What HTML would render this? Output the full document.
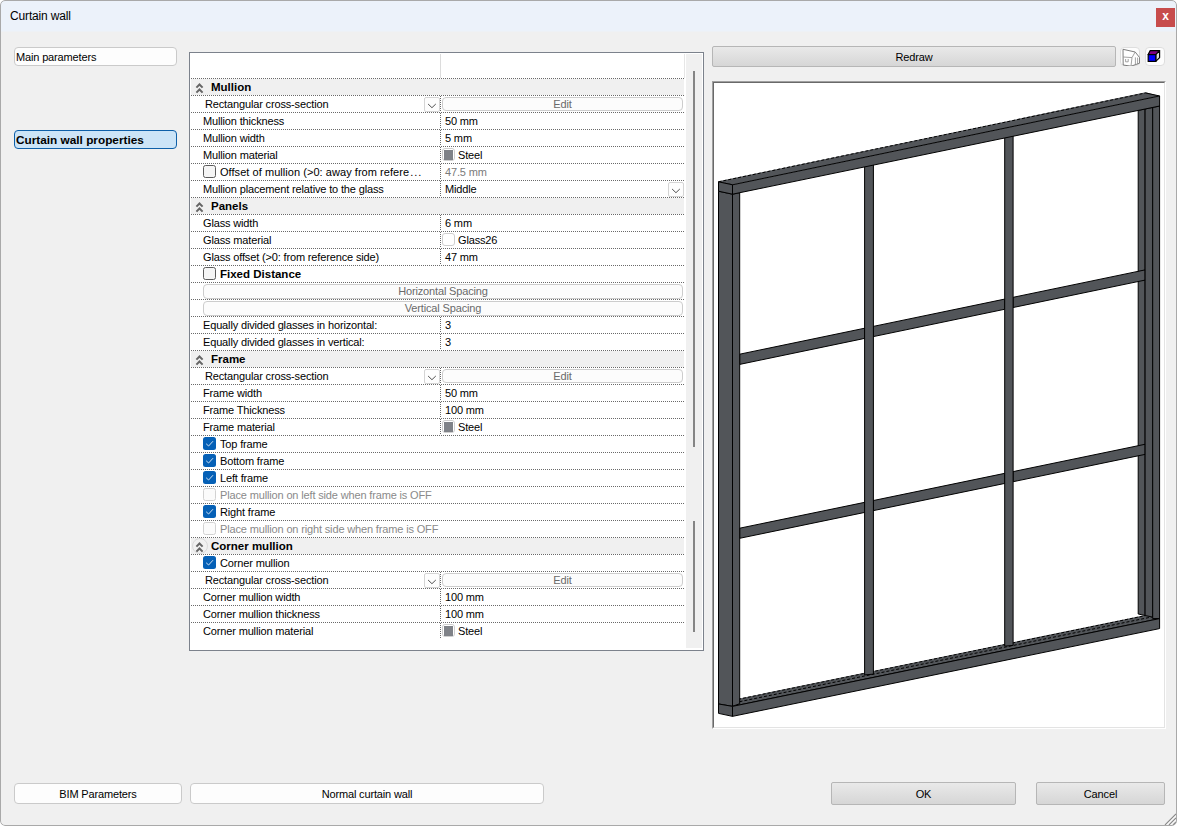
<!DOCTYPE html>
<html><head><meta charset="utf-8"><title>Curtain wall</title><style>
*{box-sizing:border-box;margin:0;padding:0}
html,body{width:1177px;height:826px;overflow:hidden;background:#ffffff}
body{position:relative;font-family:"Liberation Sans",sans-serif;font-size:11px;color:#000}
.a{position:absolute}
#win{left:0;top:0;width:1177px;height:826px;background:#f0f0f0;border-radius:5px;overflow:hidden}
#wb{left:0;top:0;width:1177px;height:826px;border:1px solid #a9a9a9;border-radius:5px;pointer-events:none}
#title{left:1px;top:1px;width:1175px;height:31px;background:linear-gradient(#ecf2fa 0 30px,#eef1f5 30px 31px)}
#ttext{left:10px;top:9px;font-size:12px;line-height:14px;color:#000}
#close{left:1156px;top:8px;width:19px;height:19px;background:#c74c4c;color:#fff;font-size:12px;line-height:17px;text-align:center;font-weight:bold}
.lbtn{background:#fdfdfd;border:1px solid #cacaca;border-radius:4px}
.gbtn{background:linear-gradient(#e9e9e9,#d6d6d6);border:1px solid #b6b6b6;border-radius:2px;text-align:center;font-size:11px;color:#000}
.t{position:absolute;white-space:nowrap;line-height:13px;letter-spacing:-0.15px}
.hl{height:1px;background:repeating-linear-gradient(90deg,#696969 0 1px,transparent 1px 2px)}
.vl{width:1px;background:repeating-linear-gradient(180deg,#696969 0 1px,transparent 1px 2px)}
.band{background:#f0f0f0}
.cb{width:13px;height:13px;border-radius:2.5px}
.cbu{border:1px solid #5b5b5b;background:#f5f5f5}
.cbd{border:1px solid #d2d2d2;background:#fbfbfb}
.cbc{background:#0560b6}
.sw{width:13px;height:13px;border:1px solid #cfcfcf;border-radius:3px;background:#fff}
.swi{left:1px;top:1px;width:9px;height:10px;background:#7f8288}
.ebtn{border:1px solid #cdcdcd;border-radius:4px;background:#fcfcfc;color:#6a6a6a;text-align:center}
.dd{width:16px;height:15px;border:1px solid #d4d4d4;border-radius:2px;background:#fdfdfd}
</style></head>
<body>
<div id="win" class="a">
<div id="title" class="a"></div>
<div id="ttext" class="t">Curtain wall</div>
<div id="close" class="a">x</div>
<div class="a lbtn t" style="left:14px;top:47px;width:163px;height:19px;line-height:19px;padding-left:1px">Main parameters</div>
<div class="a t" style="left:14px;top:130px;width:163px;height:19px;line-height:18px;padding-left:1px;background:#cce4f7;border:1.5px solid #0e5fa8;border-radius:4px;font-weight:bold;font-size:11.8px;letter-spacing:0">Curtain wall properties</div>
<div class="a lbtn t" style="left:14px;top:783px;width:168px;height:21px;line-height:21px;text-align:center">BIM Parameters</div>
<div class="a lbtn t" style="left:190px;top:783px;width:354px;height:21px;line-height:21px;text-align:center">Normal curtain wall</div>
<div class="a gbtn t" style="left:831px;top:782px;width:185px;height:23px;line-height:22px">OK</div>
<div class="a gbtn t" style="left:1036px;top:782px;width:129px;height:23px;line-height:22px">Cancel</div>
<svg class="a" style="left:1163px;top:812px" width="14" height="14"><path d="M13 2 L2 13 M13 6 L6 13 M13 10 L10 13" stroke="#8c8c8c" stroke-width="1.1"/><path d="M13.6 3 L3 13.6 M13.6 7 L7 13.6 M13.6 11 L11 13.6" stroke="#ffffff" stroke-width="0.9"/></svg>
<div class="a" style="left:189px;top:52px;width:515px;height:599px;border:1px solid #7c828c;background:#fff"></div>
<div class="a" style="left:440px;top:54px;width:1px;height:24px;background:#dcdcdc"></div>
<div class="a" style="left:684px;top:54px;width:1px;height:24px;background:#e6e6e6"></div>
<div class="a" style="left:686px;top:54px;width:16px;height:594px;background:#f0f0f0"></div>
<div class="a" style="left:693px;top:71px;width:2px;height:376px;background:#858585"></div>
<div class="a" style="left:693px;top:521px;width:2px;height:111px;background:#858585"></div>
<div class="a hl" style="left:191px;top:78px;width:493px"></div>
<div class="a band" style="left:191px;top:79px;width:493px;height:16px"></div>
<svg width="10" height="12" style="position:absolute;left:195px;top:82px"><path d="M1.4 5.6 L4.5 2.5 L7.6 5.6 M1.4 10.6 L4.5 7.5 L7.6 10.6" fill="none" stroke="#666666" stroke-width="2"/></svg>
<div class="t" style="left:211px;top:81px;font-weight:bold;font-size:11.5px;letter-spacing:0">Mullion</div>
<div class="a hl" style="left:191px;top:95px;width:493px"></div>
<div class="a vl" style="left:440px;top:96px;height:16px"></div>
<div class="t" style="left:205px;top:98px;">Rectangular cross-section</div>
<div class="a dd" style="left:424px;top:97px"><svg width="15" height="15" style="position:absolute;left:0;top:0"><path d="M3.1 6.0 L6.95 9.7 L10.8 6.0" fill="none" stroke="#505050" stroke-width="1"/></svg></div>
<div class="a ebtn t" style="left:442px;top:97px;width:241px;height:14px;line-height:12px">Edit</div>
<div class="a hl" style="left:191px;top:112px;width:493px"></div>
<div class="a vl" style="left:440px;top:113px;height:16px"></div>
<div class="t" style="left:203px;top:115px;">Mullion thickness</div>
<div class="t" style="left:445px;top:115px;">50 mm</div>
<div class="a hl" style="left:191px;top:129px;width:493px"></div>
<div class="a vl" style="left:440px;top:130px;height:16px"></div>
<div class="t" style="left:203px;top:132px;">Mullion width</div>
<div class="t" style="left:445px;top:132px;">5 mm</div>
<div class="a hl" style="left:191px;top:146px;width:493px"></div>
<div class="a vl" style="left:440px;top:147px;height:16px"></div>
<div class="t" style="left:203px;top:149px;">Mullion material</div>
<div class="a sw" style="left:442px;top:148px"><div class="a swi"></div></div>
<div class="t" style="left:458px;top:149px;">Steel</div>
<div class="a hl" style="left:191px;top:163px;width:493px"></div>
<div class="a vl" style="left:440px;top:164px;height:16px"></div>
<div class="a cb cbu" style="left:203px;top:165px"></div>
<div class="t" style="left:220px;top:166px;"><span style="letter-spacing:0.05px">Offset of mullion (&gt;0: away from refere</span><span style="letter-spacing:1px;margin-left:1px">...</span></div>
<div class="t" style="left:445px;top:166px;color:#7a7a7a">47.5 mm</div>
<div class="a hl" style="left:191px;top:180px;width:493px"></div>
<div class="a vl" style="left:440px;top:181px;height:16px"></div>
<div class="t" style="left:203px;top:183px;">Mullion placement relative to the glass</div>
<div class="t" style="left:445px;top:183px;">Middle</div>
<div class="a dd" style="left:668px;top:182px"><svg width="15" height="15" style="position:absolute;left:0;top:0"><path d="M3.1 6.0 L6.95 9.7 L10.8 6.0" fill="none" stroke="#505050" stroke-width="1"/></svg></div>
<div class="a hl" style="left:191px;top:197px;width:493px"></div>
<div class="a band" style="left:191px;top:198px;width:493px;height:16px"></div>
<svg width="10" height="12" style="position:absolute;left:195px;top:201px"><path d="M1.4 5.6 L4.5 2.5 L7.6 5.6 M1.4 10.6 L4.5 7.5 L7.6 10.6" fill="none" stroke="#666666" stroke-width="2"/></svg>
<div class="t" style="left:211px;top:200px;font-weight:bold;font-size:11.5px;letter-spacing:0">Panels</div>
<div class="a hl" style="left:191px;top:214px;width:493px"></div>
<div class="a vl" style="left:440px;top:215px;height:16px"></div>
<div class="t" style="left:203px;top:217px;">Glass width</div>
<div class="t" style="left:445px;top:217px;">6 mm</div>
<div class="a hl" style="left:191px;top:231px;width:493px"></div>
<div class="a vl" style="left:440px;top:232px;height:16px"></div>
<div class="t" style="left:203px;top:234px;">Glass material</div>
<div class="a sw" style="left:442px;top:233px"></div>
<div class="t" style="left:458px;top:234px;">Glass26</div>
<div class="a hl" style="left:191px;top:248px;width:493px"></div>
<div class="a vl" style="left:440px;top:249px;height:16px"></div>
<div class="t" style="left:203px;top:251px;">Glass offset (&gt;0: from reference side)</div>
<div class="t" style="left:445px;top:251px;">47 mm</div>
<div class="a hl" style="left:191px;top:265px;width:493px"></div>
<div class="a cb cbu" style="left:203px;top:267px"></div>
<div class="t" style="left:220px;top:268px;font-weight:bold;font-size:11.5px;letter-spacing:0">Fixed Distance</div>
<div class="a hl" style="left:191px;top:282px;width:493px"></div>
<div class="a ebtn t" style="left:203px;top:284px;width:480px;height:15px;line-height:13px">Horizontal Spacing</div>
<div class="a hl" style="left:191px;top:299px;width:493px"></div>
<div class="a ebtn t" style="left:203px;top:301px;width:480px;height:15px;line-height:13px">Vertical Spacing</div>
<div class="a hl" style="left:191px;top:316px;width:493px"></div>
<div class="a vl" style="left:440px;top:317px;height:16px"></div>
<div class="t" style="left:203px;top:319px;">Equally divided glasses in horizontal:</div>
<div class="t" style="left:445px;top:319px;">3</div>
<div class="a hl" style="left:191px;top:333px;width:493px"></div>
<div class="a vl" style="left:440px;top:334px;height:16px"></div>
<div class="t" style="left:203px;top:336px;">Equally divided glasses in vertical:</div>
<div class="t" style="left:445px;top:336px;">3</div>
<div class="a hl" style="left:191px;top:350px;width:493px"></div>
<div class="a band" style="left:191px;top:351px;width:493px;height:16px"></div>
<svg width="10" height="12" style="position:absolute;left:195px;top:354px"><path d="M1.4 5.6 L4.5 2.5 L7.6 5.6 M1.4 10.6 L4.5 7.5 L7.6 10.6" fill="none" stroke="#666666" stroke-width="2"/></svg>
<div class="t" style="left:211px;top:353px;font-weight:bold;font-size:11.5px;letter-spacing:0">Frame</div>
<div class="a hl" style="left:191px;top:367px;width:493px"></div>
<div class="a vl" style="left:440px;top:368px;height:16px"></div>
<div class="t" style="left:205px;top:370px;">Rectangular cross-section</div>
<div class="a dd" style="left:424px;top:369px"><svg width="15" height="15" style="position:absolute;left:0;top:0"><path d="M3.1 6.0 L6.95 9.7 L10.8 6.0" fill="none" stroke="#505050" stroke-width="1"/></svg></div>
<div class="a ebtn t" style="left:442px;top:369px;width:241px;height:14px;line-height:12px">Edit</div>
<div class="a hl" style="left:191px;top:384px;width:493px"></div>
<div class="a vl" style="left:440px;top:385px;height:16px"></div>
<div class="t" style="left:203px;top:387px;">Frame width</div>
<div class="t" style="left:445px;top:387px;">50 mm</div>
<div class="a hl" style="left:191px;top:401px;width:493px"></div>
<div class="a vl" style="left:440px;top:402px;height:16px"></div>
<div class="t" style="left:203px;top:404px;">Frame Thickness</div>
<div class="t" style="left:445px;top:404px;">100 mm</div>
<div class="a hl" style="left:191px;top:418px;width:493px"></div>
<div class="a vl" style="left:440px;top:419px;height:16px"></div>
<div class="t" style="left:203px;top:421px;">Frame material</div>
<div class="a sw" style="left:442px;top:420px"><div class="a swi"></div></div>
<div class="t" style="left:458px;top:421px;">Steel</div>
<div class="a hl" style="left:191px;top:435px;width:493px"></div>
<div class="a cb cbc" style="left:203px;top:437px"><svg width="13" height="13" style="position:absolute;left:0;top:0"><path d="M3.2 6.8 L5.6 9.0 L10.0 4.2" fill="none" stroke="#e4edf7" stroke-width="0.9"/></svg></div>
<div class="t" style="left:220px;top:438px;">Top frame</div>
<div class="a hl" style="left:191px;top:452px;width:493px"></div>
<div class="a cb cbc" style="left:203px;top:454px"><svg width="13" height="13" style="position:absolute;left:0;top:0"><path d="M3.2 6.8 L5.6 9.0 L10.0 4.2" fill="none" stroke="#e4edf7" stroke-width="0.9"/></svg></div>
<div class="t" style="left:220px;top:455px;">Bottom frame</div>
<div class="a hl" style="left:191px;top:469px;width:493px"></div>
<div class="a cb cbc" style="left:203px;top:471px"><svg width="13" height="13" style="position:absolute;left:0;top:0"><path d="M3.2 6.8 L5.6 9.0 L10.0 4.2" fill="none" stroke="#e4edf7" stroke-width="0.9"/></svg></div>
<div class="t" style="left:220px;top:472px;">Left frame</div>
<div class="a hl" style="left:191px;top:486px;width:493px"></div>
<div class="a cb cbd" style="left:203px;top:488px"></div>
<div class="t" style="left:220px;top:489px;color:#8a8a8a">Place mullion on left side when frame is OFF</div>
<div class="a hl" style="left:191px;top:503px;width:493px"></div>
<div class="a cb cbc" style="left:203px;top:505px"><svg width="13" height="13" style="position:absolute;left:0;top:0"><path d="M3.2 6.8 L5.6 9.0 L10.0 4.2" fill="none" stroke="#e4edf7" stroke-width="0.9"/></svg></div>
<div class="t" style="left:220px;top:506px;">Right frame</div>
<div class="a hl" style="left:191px;top:520px;width:493px"></div>
<div class="a cb cbd" style="left:203px;top:522px"></div>
<div class="t" style="left:220px;top:523px;color:#8a8a8a">Place mullion on right side when frame is OFF</div>
<div class="a hl" style="left:191px;top:537px;width:493px"></div>
<div class="a band" style="left:191px;top:538px;width:493px;height:16px"></div>
<div class="a" style="left:192px;top:538px;width:16px;height:16px;border-radius:50%;border:1px solid #dadada;background:#f1f1f1"></div>
<svg width="10" height="12" style="position:absolute;left:195px;top:541px"><path d="M1.4 5.6 L4.5 2.5 L7.6 5.6 M1.4 10.6 L4.5 7.5 L7.6 10.6" fill="none" stroke="#666666" stroke-width="2"/></svg>
<div class="t" style="left:211px;top:540px;font-weight:bold;font-size:11.5px;letter-spacing:0">Corner mullion</div>
<div class="a hl" style="left:191px;top:554px;width:493px"></div>
<div class="a cb cbc" style="left:203px;top:556px"><svg width="13" height="13" style="position:absolute;left:0;top:0"><path d="M3.2 6.8 L5.6 9.0 L10.0 4.2" fill="none" stroke="#e4edf7" stroke-width="0.9"/></svg></div>
<div class="t" style="left:220px;top:557px;">Corner mullion</div>
<div class="a hl" style="left:191px;top:571px;width:493px"></div>
<div class="a vl" style="left:440px;top:572px;height:16px"></div>
<div class="t" style="left:205px;top:574px;">Rectangular cross-section</div>
<div class="a dd" style="left:424px;top:573px"><svg width="15" height="15" style="position:absolute;left:0;top:0"><path d="M3.1 6.0 L6.95 9.7 L10.8 6.0" fill="none" stroke="#505050" stroke-width="1"/></svg></div>
<div class="a ebtn t" style="left:442px;top:573px;width:241px;height:14px;line-height:12px">Edit</div>
<div class="a hl" style="left:191px;top:588px;width:493px"></div>
<div class="a vl" style="left:440px;top:589px;height:16px"></div>
<div class="t" style="left:203px;top:591px;">Corner mullion width</div>
<div class="t" style="left:445px;top:591px;">100 mm</div>
<div class="a hl" style="left:191px;top:605px;width:493px"></div>
<div class="a vl" style="left:440px;top:606px;height:16px"></div>
<div class="t" style="left:203px;top:608px;">Corner mullion thickness</div>
<div class="t" style="left:445px;top:608px;">100 mm</div>
<div class="a hl" style="left:191px;top:622px;width:493px"></div>
<div class="a vl" style="left:440px;top:623px;height:16px"></div>
<div class="t" style="left:203px;top:625px;">Corner mullion material</div>
<div class="a sw" style="left:442px;top:624px"><div class="a swi"></div></div>
<div class="t" style="left:458px;top:625px;">Steel</div>
<div class="a gbtn t" style="left:712px;top:46px;width:404px;height:21px;line-height:21px">Redraw</div>
<div class="a" style="left:1120px;top:47px;width:20px;height:19px;border:1px solid #dedede;border-radius:4px;background:#fdfdfd"><svg width="20" height="19" style="position:absolute;left:-1px;top:-1px" viewBox="1120 47 20 19">
<path d="M1123 49.3 L1135.2 52 L1139.6 57.6 L1139.6 63.2 L1131 66.2 L1123.2 65 Z" fill="#fff" stroke="#6e6e6e" stroke-width="0.9" stroke-linejoin="round"/>
<path d="M1123.2 57 L1132 57.6 L1135.2 52 M1132 57.6 L1131 66 M1135.4 57.4 L1135.4 65 M1137.6 57.6 L1137.6 64.2 M1125.6 59 L1125.6 61.8 L1128.2 61.8 L1128.2 59" fill="none" stroke="#8c8c8c" stroke-width="0.8"/>
</svg></div>
<div class="a" style="left:1145px;top:47px;width:20px;height:19px;border:1px solid #dedede;border-radius:4px;background:#fdfdfd"><svg width="20" height="19" style="position:absolute;left:-1px;top:-1px" viewBox="1145 47 20 19">
<polygon points="1148.2,54.6 1150.2,50.6 1159.6,50.6 1155.8,54.6" fill="#800080" stroke="#000" stroke-width="1.2" stroke-linejoin="round"/>
<polygon points="1155.8,54.6 1159.6,50.6 1159.6,57.6 1155.8,61.4" fill="#dcdcdc" stroke="#000" stroke-width="1.2" stroke-linejoin="round"/>
<rect x="1148.2" y="54.6" width="7.6" height="6.8" fill="#0000ff" stroke="#000" stroke-width="1.2"/>
</svg></div>
<div class="a" style="left:712px;top:81px;width:454px;height:648px;border-top:1px solid #a0a0a0;border-left:1px solid #a0a0a0;border-right:1px solid #ffffff;border-bottom:1px solid #ffffff"></div>
<div class="a" style="left:713px;top:82px;width:452px;height:646px;border-top:1px solid #696969;border-left:1px solid #696969;border-right:1px solid #e3e3e3;border-bottom:1px solid #e3e3e3;background:#fff"></div>
<svg class="a" style="left:714px;top:83px" width="450" height="644" viewBox="714 83 450 644"><polygon points="732.50,706.36 1159.60,618.59 1145.60,614.99 718.50,702.76" fill="#525559" stroke="none" stroke-width="1" stroke-linejoin="round" />
<line x1="732.50" y1="706.36" x2="1159.60" y2="618.59" stroke="#000" stroke-width="1" />
<line x1="724.80" y1="704.71" x2="1151.90" y2="616.94" stroke="#000" stroke-width="1" stroke-dasharray="3 2"/>
<line x1="718.50" y1="703.36" x2="1145.60" y2="615.59" stroke="#000" stroke-width="1" stroke-dasharray="3 2"/>
<polygon points="1138.20,110.42 1145.10,109.00 1145.10,615.49 1138.20,614.01" fill="#525559" stroke="#000" stroke-width="1" stroke-linejoin="round" />
<polygon points="739.70,354.20 864.60,328.22 864.60,338.42 739.70,364.40" fill="#525559" stroke="#000" stroke-width="1" stroke-linejoin="round" />
<polygon points="873.40,326.39 1004.70,299.08 1004.70,309.28 873.40,336.59" fill="#525559" stroke="#000" stroke-width="1" stroke-linejoin="round" />
<polygon points="1013.10,297.33 1145.10,269.88 1145.10,280.08 1013.10,307.53" fill="#525559" stroke="#000" stroke-width="1" stroke-linejoin="round" />
<polygon points="739.70,528.20 864.60,502.35 864.60,512.45 739.70,538.30" fill="#525559" stroke="#000" stroke-width="1" stroke-linejoin="round" />
<polygon points="873.40,500.52 1004.70,473.35 1004.70,483.45 873.40,510.62" fill="#525559" stroke="#000" stroke-width="1" stroke-linejoin="round" />
<polygon points="1013.10,471.61 1145.10,444.28 1145.10,454.38 1013.10,481.71" fill="#525559" stroke="#000" stroke-width="1" stroke-linejoin="round" />
<polygon points="864.60,165.92 873.40,164.10 873.40,674.11 864.60,674.91" fill="#525559" stroke="#000" stroke-width="1" stroke-linejoin="round" />
<polygon points="1004.70,136.99 1013.10,135.26 1013.10,645.36 1004.70,646.16" fill="#525559" stroke="#000" stroke-width="1" stroke-linejoin="round" />
<polygon points="1145.10,109.00 1152.70,107.43 1152.70,617.11 1145.10,615.49" fill="#525559" stroke="#000" stroke-width="1" stroke-linejoin="round" />
<polygon points="1152.70,107.43 1159.60,106.00 1159.60,618.59 1152.70,618.59" fill="#525559" stroke="#000" stroke-width="1" stroke-linejoin="round" />
<polygon points="718.50,191.20 732.50,194.20 732.50,706.36 718.50,703.96" fill="#525559" stroke="#000" stroke-width="1" stroke-linejoin="round" />
<polygon points="732.50,194.20 739.70,192.71 739.70,703.68 732.50,706.36" fill="#525559" stroke="#000" stroke-width="1" stroke-linejoin="round" />
<polygon points="732.50,184.80 1159.60,95.96 1145.60,92.36 718.50,181.20" fill="#525559" stroke="none" stroke-width="1" stroke-linejoin="round" />
<line x1="718.50" y1="181.80" x2="1145.60" y2="92.96" stroke="#000" stroke-width="1" stroke-dasharray="3 2"/>
<line x1="718.50" y1="181.80" x2="732.50" y2="184.80" stroke="#000" stroke-width="1" />
<line x1="1145.60" y1="92.96" x2="1159.60" y2="95.96" stroke="#000" stroke-width="1" />
<polygon points="718.50,181.80 732.50,184.80 732.50,194.20 718.50,191.20" fill="#525559" stroke="#000" stroke-width="1" stroke-linejoin="round" />
<polygon points="732.50,184.80 1159.60,95.96 1159.60,106.00 732.50,194.20" fill="#525559" stroke="#000" stroke-width="1" stroke-linejoin="round" />
<polygon points="718.50,703.96 732.50,706.36 732.50,716.36 718.50,713.36" fill="#525559" stroke="#000" stroke-width="1" stroke-linejoin="round" />
<polygon points="732.50,706.36 1159.60,618.59 1159.60,628.59 732.50,716.36" fill="#525559" stroke="#000" stroke-width="1" stroke-linejoin="round" /></svg>
<div id="wb" class="a"></div>
</div>
</body></html>
